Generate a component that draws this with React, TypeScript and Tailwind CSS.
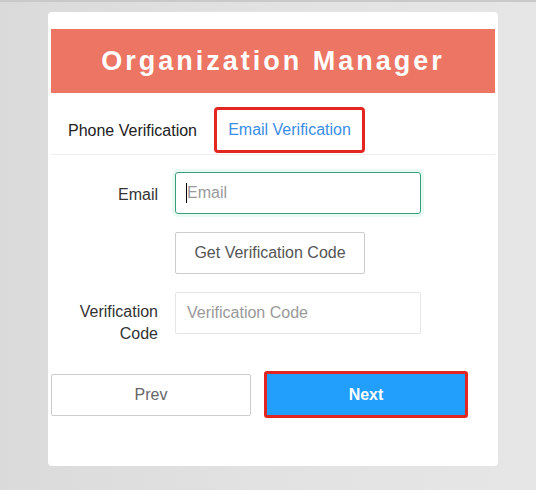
export default function App() {
  return (
    <div className="w-[536px] h-[490px] border-t-2 border-[#c9c9c9] bg-gradient-to-r from-[#dadada] via-[#e2e2e2] to-[#e6e6e6] pt-[10px] pl-[48px] font-['Liberation_Sans',Arial,sans-serif]">
      <div className="w-[450px] h-[454px] bg-white rounded-[4px] px-[3px] pt-[17px]">
        <div className="w-[444px] h-[64px] bg-[#ec7563] flex items-center justify-center">
          <h1 className="text-white text-[27px] font-bold tracking-[3px]">Organization Manager</h1>
        </div>

        <div className="mt-[14px] h-[48px] border-b border-[#eeeeee] flex items-start">
          <div className="ml-[17px] h-[48px] flex items-center text-[16px] text-[#222]">Phone Verification</div>
          <div className="ml-[17px] w-[151px] h-[46px] border-[3px] border-[#e3261f] rounded-[4px] flex items-center justify-center text-[16px] text-[#3a8ee6]">
            Email Verification
          </div>
        </div>

        <div className="mt-[17px] flex flex-col gap-[18px]">
          <div className="flex">
            <label className="w-[107px] text-right text-[16px] text-[#333] pt-[11px]">Email</label>
            <div className="ml-[17px] w-[246px] h-[42px] rounded-[3px] border border-[#3aa07a] shadow-[0_0_0_3px_#e9faf2] flex items-center px-[10px]">
              <span className="w-px h-[20px] bg-black" />
              <span className="text-[16px] text-[#999]">Email</span>
            </div>
          </div>

          <div className="flex">
            <div className="w-[107px]" />
            <button className="ml-[17px] w-[190px] h-[42px] border border-[#cccccc] rounded-[2px] text-[16px] text-[#555] bg-white">
              Get Verification Code
            </button>
          </div>

          <div className="flex">
            <label className="w-[107px] text-right text-[16px] text-[#333] leading-[22px] pt-[9px]">
              Verification
              <br />
              Code
            </label>
            <div className="ml-[17px] w-[246px] h-[42px] rounded-[2px] border border-[#e6e6e6] flex items-center px-[11px]">
              <span className="text-[16px] text-[#999]">Verification Code</span>
            </div>
          </div>
        </div>

        <div className="mt-[26px] flex items-center">
          <button className="w-[200px] h-[42px] border border-[#cccccc] rounded-[2px] text-[16px] text-[#666] bg-white">Prev</button>
          <div className="ml-[13px] w-[204px] h-[47px] border-[3px] border-[#e3261f] rounded-[3px] flex">
            <button className="flex-1 bg-[#229ffd] text-white text-[16px] font-bold">Next</button>
          </div>
        </div>
      </div>
    </div>
  );
}
